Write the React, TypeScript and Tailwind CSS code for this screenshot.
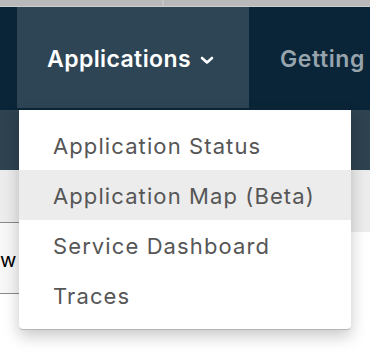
import React from 'react';

const menuItems = [
  { label: 'Application Status' },
  { label: 'Application Map (Beta)', active: true },
  { label: 'Service Dashboard' },
  { label: 'Traces' },
];

export default function App() {
  return (
    <div
      className="relative w-[370px] h-[354px] overflow-hidden bg-white"
      style={{ fontFamily: 'Inter, "Noto Sans", sans-serif' }}
    >
      {/* Browser chrome strip */}
      <div className="flex h-[7px] bg-[#b9b9b9] border-b border-[#cdcdcd]">
        <div className="w-[162px]" />
        <div className="w-[2px] bg-[#c4c4c4]" />
      </div>

      {/* Top nav */}
      <nav className="flex h-[103px] bg-[#0b2538]">
        <div className="w-[17px]" />
        <div className="flex h-[101px] w-[232px] items-center bg-[#2e4555] pl-[30px] pt-[4px]">
          <span className="text-[23px] font-semibold tracking-[0.4px] text-white">Applications</span>
          <svg className="ml-[9px] mt-[2px]" width="14" height="9" viewBox="0 0 14 9" fill="none">
            <path d="M2 2l5 4.5L12 2" stroke="white" strokeWidth="2.6" strokeLinecap="round" strokeLinejoin="round" />
          </svg>
        </div>
        <div className="flex items-center pl-[31px] pt-[2px]">
          <span className="text-[23px] font-semibold tracking-[0.6px] text-[#97a4ad]">Getting</span>
        </div>
      </nav>

      {/* Secondary bar */}
      <div className="h-[60px] bg-[#2e4250]" />

      {/* Page content behind menu */}
      <div className="flex">
        <div className="h-[52px] w-[19px] bg-[#ececec]" />
        <div className="h-[62px] flex-1 bg-[#ececec]" />
      </div>
      <div className="mt-[-10px] flex">
        <div className="h-[72px] w-[19px] overflow-hidden border-y border-[#8a8a8a] bg-[#f7f7f7] pt-[27px]">
          <span className="block text-[20px] leading-none text-black">w</span>
        </div>
      </div>

      {/* Dropdown menu */}
      <div className="absolute left-[19px] top-[110px] w-[332px] rounded-b-[4px] border-b border-[#b5b5b5] bg-white pt-[10px] pb-[9px] shadow-[0_6px_16px_rgba(0,0,0,0.22)]">
        {menuItems.map((item) => (
          <div
            key={item.label}
            className={`flex h-[50px] items-center pl-[34px] pt-[2px] text-[22px] tracking-[1.1px] text-[#565656] ${
              item.active ? 'bg-[#ececec]' : ''
            }`}
          >
            {item.label}
          </div>
        ))}
      </div>
    </div>
  );
}
